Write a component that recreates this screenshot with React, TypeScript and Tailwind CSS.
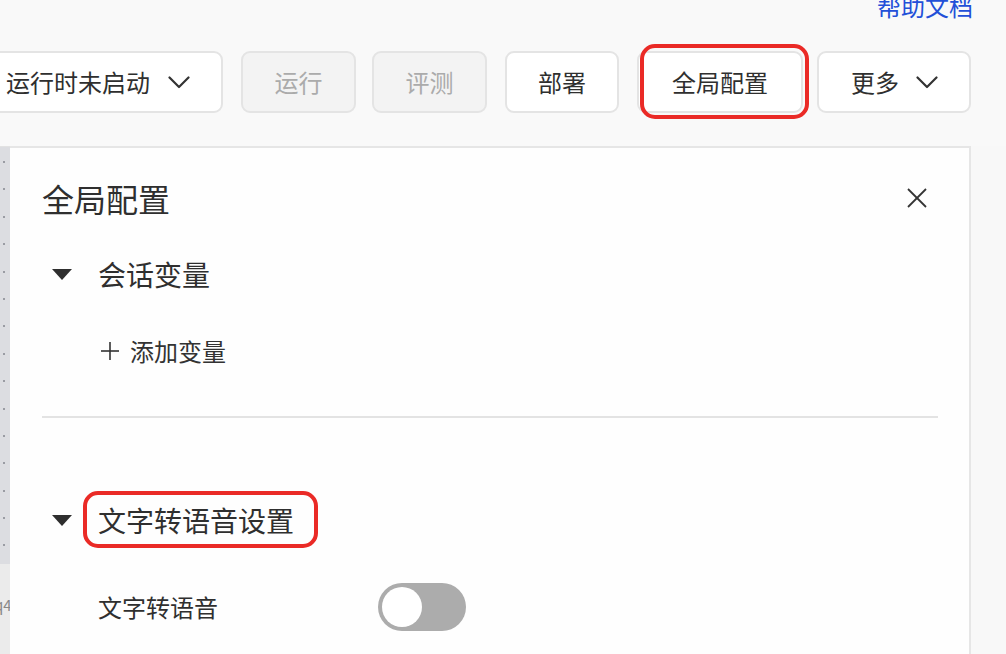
import React from "react";

const Chevron = () => (
  <svg width="22" height="13" viewBox="0 0 22 13" fill="none">
    <polyline points="1.5,1.5 11,11 20.5,1.5" stroke="#333" strokeWidth="2.2" strokeLinecap="round" strokeLinejoin="round" />
  </svg>
);

const Tri = () => (
  <svg width="20" height="11" viewBox="0 0 20 11">
    <polygon points="0,0 20,0 10,11" fill="#2e2e2e" />
  </svg>
);

export default function App() {
  const dots = Array.from({ length: 15 });
  return (
    <div className="w-[1006px] h-[654px] overflow-hidden bg-[#f9f9f9] font-['Noto_Sans_CJK_SC',sans-serif] text-[#2f2f2f] flex flex-col">
      {/* help link */}
      <div className="flex justify-end pr-[33px] -mt-[6px]">
        <span className="text-[24px] leading-[24px] text-[#2350d8]">帮助文档</span>
      </div>

      {/* toolbar */}
      <div className="flex items-center mt-[33px] h-[62px] -ml-[20px]">
        <div className="w-[243px] h-[62px] rounded-[9px] border-2 border-[#e4e4e4] bg-white flex items-center pl-[24px] gap-[18px]">
          <span className="text-[24px] leading-[24px]">运行时未启动</span>
          <Chevron />
        </div>
        <div className="ml-[18px] w-[115px] h-[62px] rounded-[9px] border-2 border-[#e4e4e4] bg-[#f3f3f3] flex items-center justify-center">
          <span className="text-[24px] leading-[24px] text-[#ababab]">运行</span>
        </div>
        <div className="ml-[16px] w-[115px] h-[62px] rounded-[9px] border-2 border-[#e4e4e4] bg-[#f3f3f3] flex items-center justify-center">
          <span className="text-[24px] leading-[24px] text-[#ababab]">评测</span>
        </div>
        <div className="ml-[18px] w-[114px] h-[62px] rounded-[9px] border-2 border-[#e4e4e4] bg-white flex items-center justify-center">
          <span className="text-[24px] leading-[24px]">部署</span>
        </div>
        <div className="ml-[18px] relative w-[166px] h-[62px] rounded-[9px] border-2 border-[#e4e4e4] bg-white flex items-center justify-center">
          <span className="text-[24px] leading-[24px]">全局配置</span>
          <div className="absolute left-[1px] -top-[9px] w-[169px] h-[75px] rounded-[15px] border-[4px] border-[#ea2a26]" />
        </div>
        <div className="ml-[14px] w-[154px] h-[62px] rounded-[9px] border-2 border-[#e4e4e4] bg-white flex items-center pl-[32px] gap-[17px]">
          <span className="text-[24px] leading-[24px]">更多</span>
          <Chevron />
        </div>
      </div>

      {/* body */}
      <div className="flex flex-1 mt-[33px]">
        <div className="w-[10px] flex flex-col">
          <div className="h-[418px] bg-[#dcdde1] border-t border-[#e2e2e2] flex flex-col items-start pl-[3px] pt-[14px] gap-[25.4px]">
            {dots.map((_, i) => (
              <div key={i} className="w-[2px] h-[2px] bg-[#9a9ca3]" />
            ))}
          </div>
          <div className="flex-1 bg-[#ebebeb] overflow-hidden">
            <div className="mt-[33px] -ml-[6px] text-[15px] leading-[15px] text-[#888]">q4</div>
          </div>
        </div>

        <div className="w-[961px] bg-[#fefefe] border-t-2 border-r-2 border-[#e6e6e6] pl-[32px] pr-[31px] pt-[30px] flex flex-col">
          <div className="flex items-center justify-between h-[40px]">
            <span className="text-[32px] leading-[40px]">全局配置</span>
            <svg width="20" height="20" viewBox="0 0 20 20" className="mr-[11px]">
              <line x1="1" y1="1" x2="19" y2="19" stroke="#333" strokeWidth="1.8" />
              <line x1="19" y1="1" x2="1" y2="19" stroke="#333" strokeWidth="1.8" />
            </svg>
          </div>

          <div className="flex items-center h-[40px] mt-[36px] pl-[10px]">
            <Tri />
            <span className="ml-[26px] text-[28px] leading-[40px]">会话变量</span>
          </div>

          <div className="flex items-center h-[32px] mt-[41px] pl-[58px]">
            <svg width="20" height="20" viewBox="0 0 20 20">
              <line x1="10" y1="1" x2="10" y2="19" stroke="#333" strokeWidth="1.6" />
              <line x1="1" y1="10" x2="19" y2="10" stroke="#333" strokeWidth="1.6" />
            </svg>
            <span className="ml-[10px] text-[24px] leading-[32px] text-[#333]">添加变量</span>
          </div>

          <div className="h-[2px] bg-[#e3e3e3] mt-[49px]" />

          <div className="flex items-center h-[40px] mt-[82px] pl-[10px]">
            <Tri />
            <span className="relative ml-[26px] text-[28px] leading-[40px]">
              文字转语音设置
              <span className="absolute -left-[15px] -top-[9px] w-[235px] h-[57px] rounded-[15px] border-[4px] border-[#ea2a26]" />
            </span>
          </div>

          <div className="flex items-center h-[48px] mt-[43px] pl-[56px]">
            <span className="w-[280px] text-[24px] leading-[32px]">文字转语音</span>
            <div className="w-[88px] h-[48px] rounded-full bg-[#acacac] flex items-center pl-[4px]">
              <div className="w-[40px] h-[40px] rounded-full bg-white" />
            </div>
          </div>
        </div>
        <div className="flex-1 bg-[#f8f8f8]" />
      </div>
    </div>
  );
}
